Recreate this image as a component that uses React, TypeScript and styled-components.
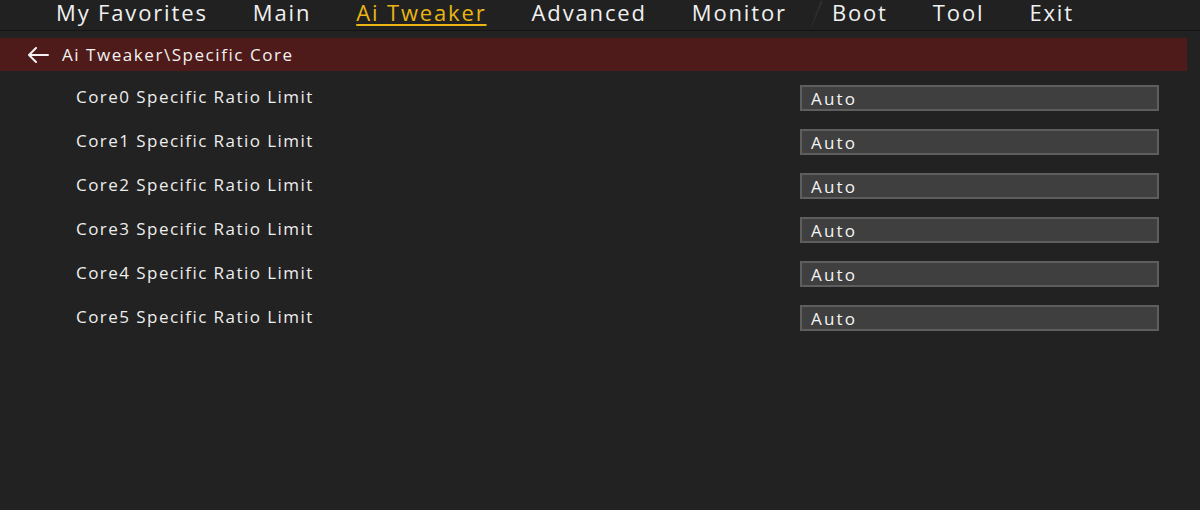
import React from "react";
import styled, { createGlobalStyle } from "styled-components";

const GlobalStyle = createGlobalStyle`
  html, body {
    margin: 0;
    padding: 0;
    background: #222222;
  }
  * {
    box-sizing: border-box;
  }
`;

const Page = styled.div`
  width: 1200px;
  height: 510px;
  background: #222222;
  font-family: "Open Sans", "Noto Sans", sans-serif;
  color: #f2f2f2;
  overflow: hidden;
`;

const NavBar = styled.nav`
  height: 31px;
  display: flex;
  align-items: flex-start;
  gap: 45px;
  padding-left: 56px;
  background: #212121;
  border-bottom: 1px solid #141414;
`;

interface TabProps {
  active?: boolean;
  divider?: boolean;
}

const Tab = styled.div<TabProps>`
  position: relative;
  font-size: 22px;
  line-height: 25px;
  padding-bottom: 4px;
  letter-spacing: 1.85px;
  color: ${(props) => (props.active ? "#e9b613" : "#f0f0f0")};
  text-decoration: ${(props) => (props.active ? "underline" : "none")};
  text-decoration-thickness: 2px;
  text-underline-offset: 3px;
  white-space: nowrap;

  &::before {
    content: "";
    display: ${(props) => (props.divider ? "block" : "none")};
    position: absolute;
    left: -16px;
    top: 1px;
    width: 1px;
    height: 26px;
    background: linear-gradient(#3c3c3c, #2a2a2a);
    transform: skewX(-22deg);
  }
`;

const Crumb = styled.div`
  margin-top: 7px;
  width: 1187px;
  height: 33px;
  background: #4e1a1a;
  display: flex;
  align-items: center;
  padding-left: 27px;
  gap: 13px;
  font-size: 17px;
  letter-spacing: 1.55px;
  color: #f2f2f2;
`;

const List = styled.div`
  display: flex;
  flex-direction: column;
  padding-top: 5px;
`;

const Row = styled.div`
  height: 44px;
  display: grid;
  grid-template-columns: 724px 359px;
  align-items: center;
  padding-left: 76px;
`;

const Label = styled.span`
  font-size: 17px;
  letter-spacing: 1.45px;
  color: #eeeeee;
  margin-top: -3px;
`;

const Field = styled.div`
  height: 26px;
  background: #3f3f3f;
  border: 2px solid #5e5e5e;
  display: flex;
  align-items: center;
  padding-left: 9px;
  font-size: 17px;
  letter-spacing: 2.2px;
  color: #f4f4f4;
`;

const tabs = [
  "My Favorites",
  "Main",
  "Ai Tweaker",
  "Advanced",
  "Monitor",
  "Boot",
  "Tool",
  "Exit",
];

const cores = [0, 1, 2, 3, 4, 5];

const BackArrow = () => (
  <svg width="22" height="16" viewBox="0 0 22 16" fill="none">
    <path
      d="M21 8H2M9 1L2 8l7 7"
      stroke="#f2f2f2"
      strokeWidth="2"
      strokeLinecap="round"
      strokeLinejoin="round"
    />
  </svg>
);

const App = () => {
  return (
    <Page>
      <GlobalStyle />
      <NavBar>
        {tabs.map((t) => (
          <Tab key={t} active={t === "Ai Tweaker"} divider={t === "Boot"}>
            {t}
          </Tab>
        ))}
      </NavBar>
      <Crumb>
        <BackArrow />
        <span>Ai Tweaker\Specific Core</span>
      </Crumb>
      <List>
        {cores.map((c) => (
          <Row key={c}>
            <Label>Core{c} Specific Ratio Limit</Label>
            <Field>Auto</Field>
          </Row>
        ))}
      </List>
    </Page>
  );
};

export default App;
